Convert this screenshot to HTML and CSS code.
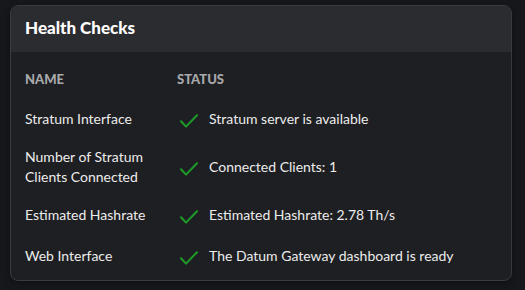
FILE: index.html
```html
<!DOCTYPE html>
<html lang="en">
<head>
<meta charset="utf-8">
<title>Health Checks</title>
<link rel="stylesheet" href="styles.css">
</head>
<body>
<section class="card">
  <header class="card-header">
    <h2 class="card-title">Health Checks</h2>
  </header>
  <div class="checks">
    <div class="checks-head">
      <span class="col-name">Name</span>
      <span class="col-status">Status</span>
    </div>
    <div class="check-row">
      <span class="check-name">Stratum Interface</span>
      <svg class="check-icon" viewBox="0 0 18 14" aria-hidden="true"><path d="M1 7.2 L6 12.6 L17 1.2"/></svg>
      <span class="check-status">Stratum server is available</span>
    </div>
    <div class="check-row">
      <span class="check-name">Number of Stratum<br>Clients Connected</span>
      <svg class="check-icon" viewBox="0 0 18 14" aria-hidden="true"><path d="M1 7.2 L6 12.6 L17 1.2"/></svg>
      <span class="check-status">Connected Clients: 1</span>
    </div>
    <div class="check-row">
      <span class="check-name">Estimated Hashrate</span>
      <svg class="check-icon" viewBox="0 0 18 14" aria-hidden="true"><path d="M1 7.2 L6 12.6 L17 1.2"/></svg>
      <span class="check-status">Estimated Hashrate: 2.78 Th/s</span>
    </div>
    <div class="check-row">
      <span class="check-name">Web Interface</span>
      <svg class="check-icon" viewBox="0 0 18 14" aria-hidden="true"><path d="M1 7.2 L6 12.6 L17 1.2"/></svg>
      <span class="check-status">The Datum Gateway dashboard is ready</span>
    </div>
  </div>
</section>
</body>
</html>
```
FILE: styles.css
```css
* { box-sizing: border-box; }
html, body {
  margin: 0;
  padding: 0;
  background: #16181c;
  width: 525px;
  height: 290px;
  overflow: hidden;
  font-family: Lato, "Noto Sans", sans-serif;
  color: #ececec;
}
body {
  padding: 5px 13px 0 10px;
}
.card {
  width: 502px;
  height: 276px;
  background: #1e1f22;
  border: 1px solid #3a3b3f;
  border-radius: 8px;
  overflow: hidden;
  box-shadow: 0 2px 8px rgba(0,0,0,0.4);
}
.card-header {
  height: 46px;
  background: #2b2c2f;
  display: flex;
  align-items: center;
  padding: 0 0 3px 14px;
}
.card-title {
  margin: 0;
  font-size: 17px;
  font-weight: 900;
  color: #ffffff;
  letter-spacing: 0;
}
.checks {
  padding: 17px 14px 0 14px;
}
.checks-head,
.check-row {
  display: grid;
  grid-template-columns: 152px 32px 1fr;
  align-items: center;
  line-height: 20px;
}
.checks-head {
  font-size: 13px;
  font-weight: 900;
  color: #a8a9ab;
  text-transform: uppercase;
  margin-bottom: 20px;
}
.col-status { grid-column: 2 / 4; }
.check-row {
  font-size: 14px;
  margin-bottom: 18px;
}
.check-row:last-child {
  padding-top: 3px;
}
.check-icon {
  width: 18px;
  height: 14px;
  margin: 4px 0 0 3px;
  fill: none;
  stroke: #1f9c28;
  stroke-width: 2;
  stroke-linecap: round;
  stroke-linejoin: round;
}
```
